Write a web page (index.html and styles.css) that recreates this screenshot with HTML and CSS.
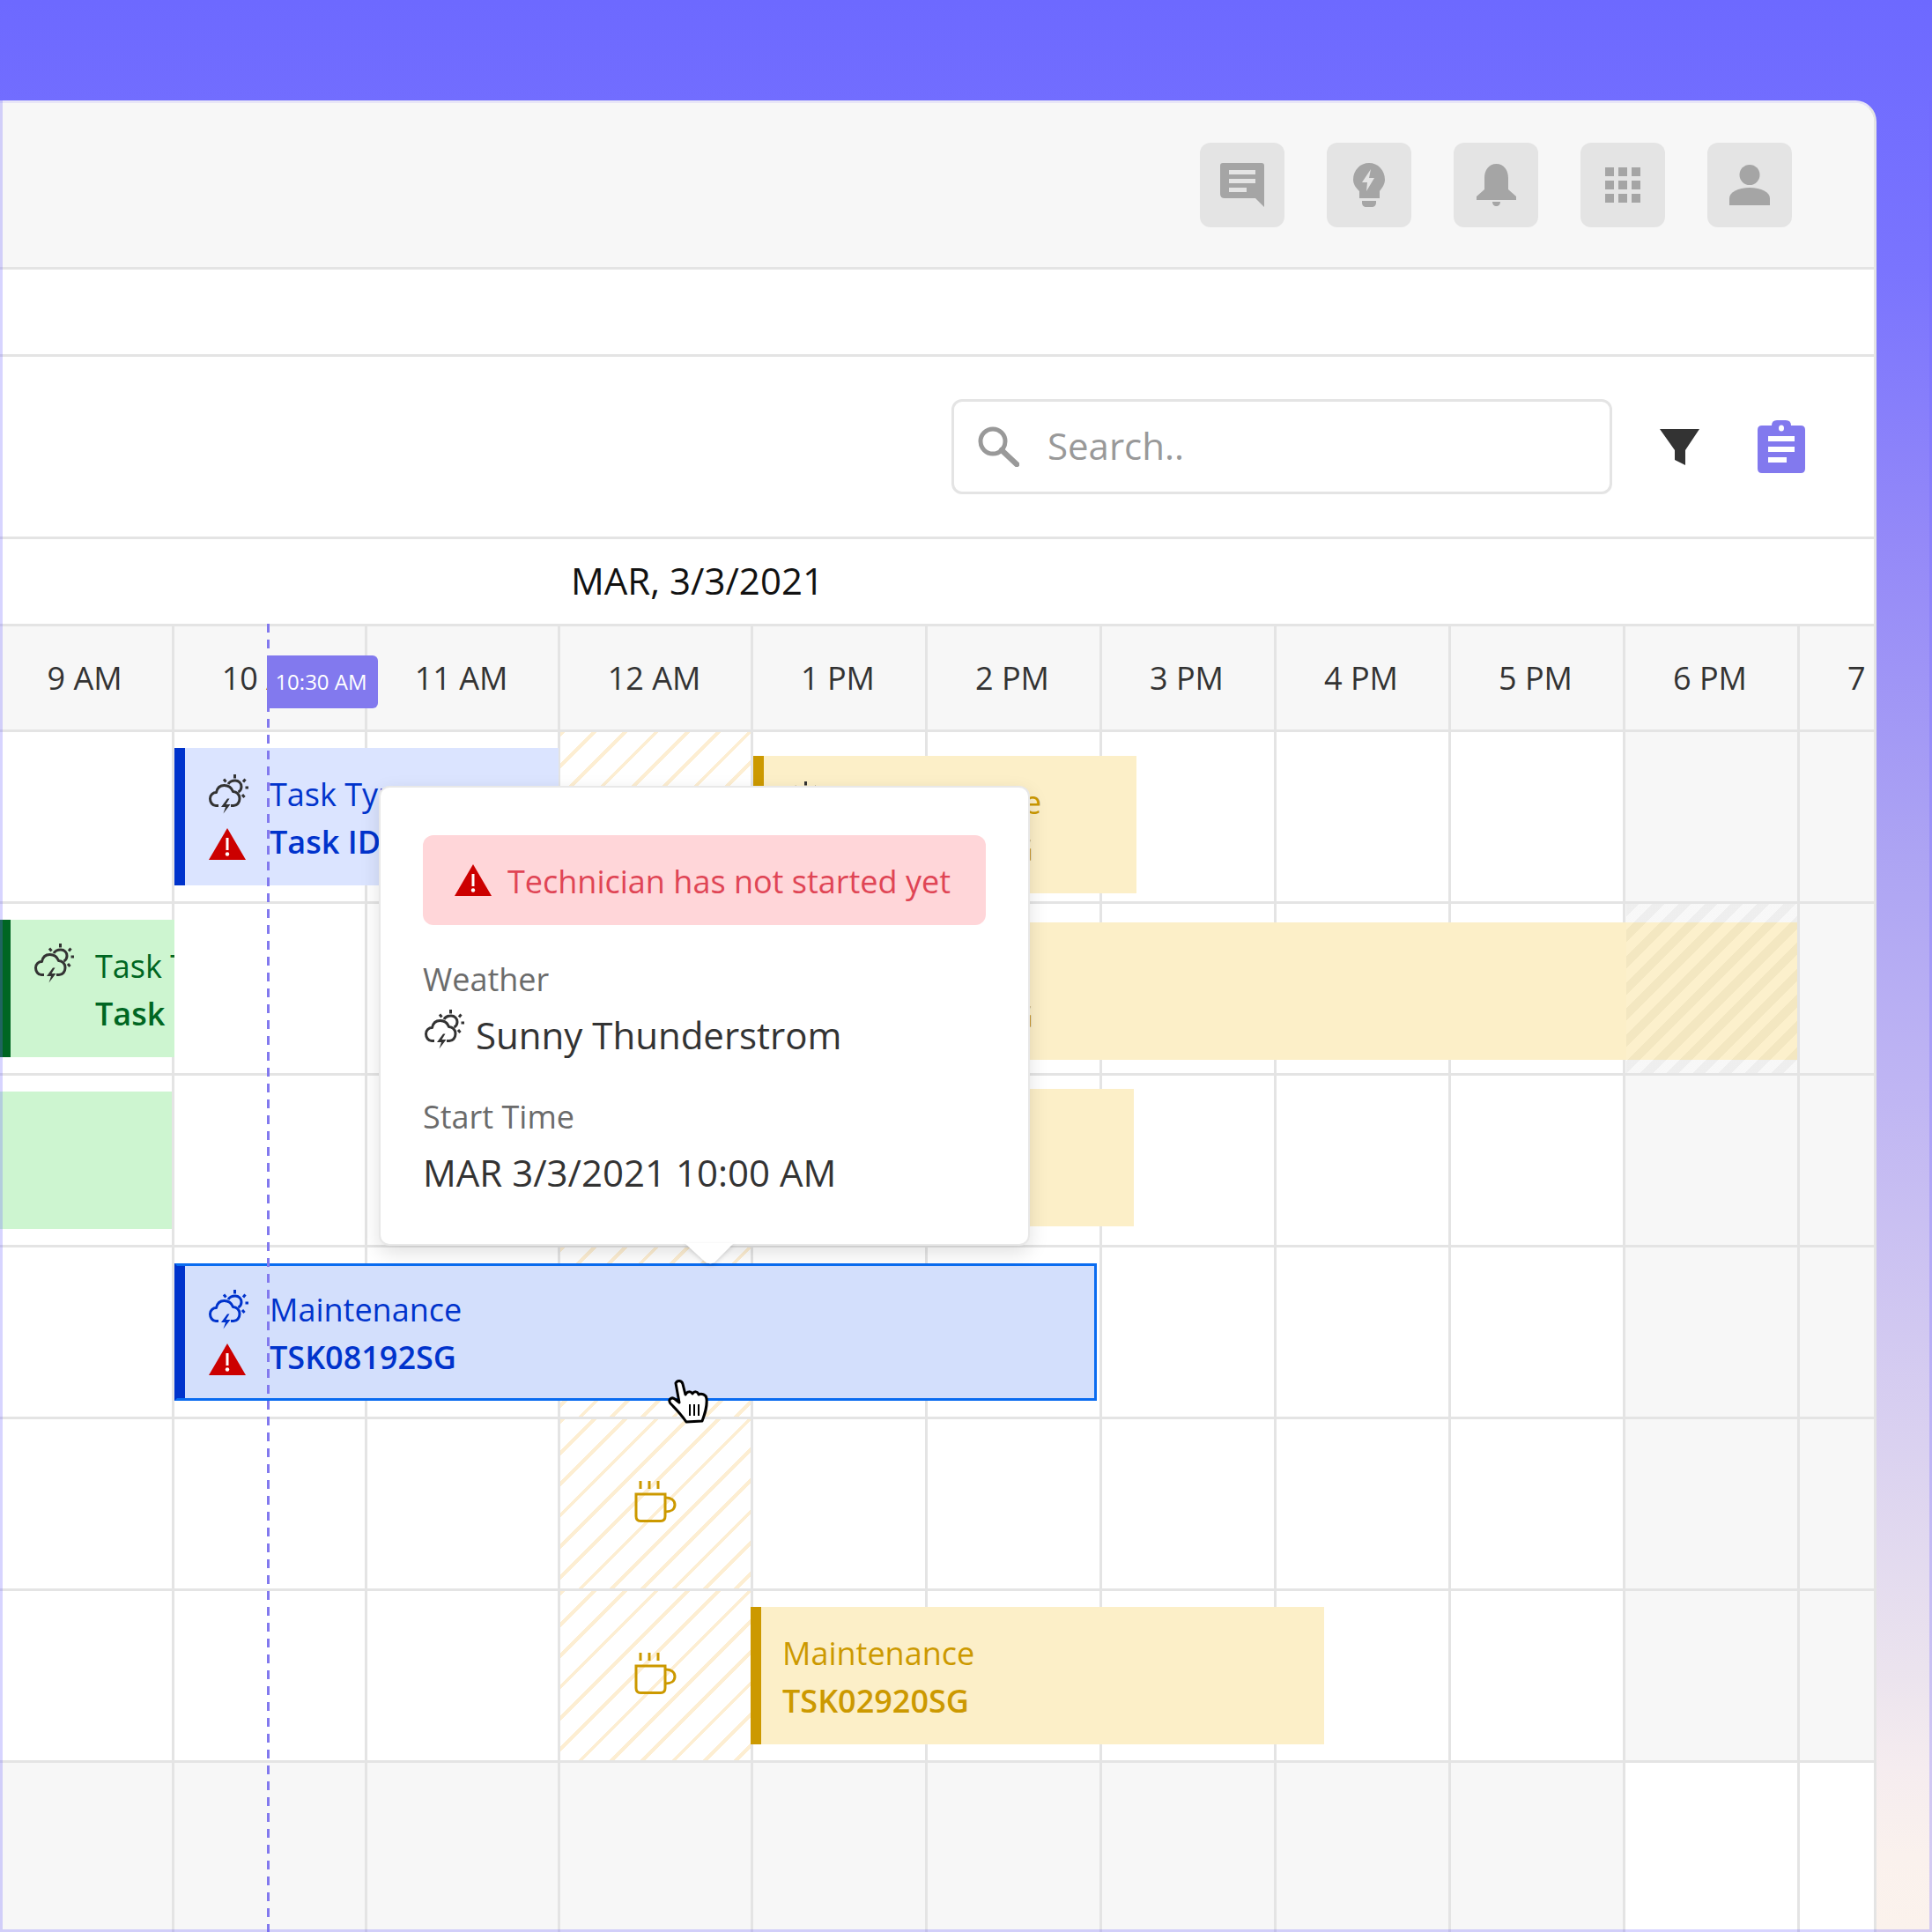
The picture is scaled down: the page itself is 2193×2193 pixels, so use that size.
FILE: index.html
```html
<!DOCTYPE html>
<html lang="en">
<head>
<meta charset="utf-8">
<title>Schedule</title>
<link rel="stylesheet" href="styles.css">
</head>
<body>
<svg class="defs" width="0" height="0" aria-hidden="true">
  <symbol id="weather" viewBox="0 0 45 45">
    <g fill="none" stroke="currentColor" stroke-width="3" stroke-linecap="butt" stroke-linejoin="round">
      <path d="M11 35.500H8C4 35.500 1.500 31.500 1.500 27.500C1.500 23 5 20.500 8.500 20.500C9.500 15.500 13 12.500 17.500 12.500C22.500 12.500 26 15.500 27.500 19.500C31.500 19.500 35 22.500 35 27.500C35 32 32 35.500 28 35.500H25"/>
      <path d="M22 11C23.500 8.500 26.500 7 30 7C34 7 37 10 37 14C37 16.500 35.500 19 33.500 20"/>
      <path d="M29.500 0V4.500M17 5.500L19.500 8.500M41.500 5.500L39 8.500M41.500 15H45M38 23L40.500 26"/>
    </g>
    <path fill="currentColor" d="M21 27.500L14 37H19L16.500 44.500L24.500 34H19.500L23.500 27.500Z"/>
  </symbol>
  <symbol id="warn" viewBox="0 0 42 36">
    <path fill="#cc0000" d="M21 0L42 36H0Z"/>
    <rect fill="#fff" x="19.500" y="11" width="3" height="14"/>
    <circle fill="#fff" cx="21" cy="29.500" r="2.200"/>
  </symbol>
  <symbol id="coffee" viewBox="0 0 48 47">
    <g fill="none" stroke="currentColor" stroke-width="3">
      <path d="M2 15H35V40C35 44 33 45.500 30 45.500H7C4 45.500 2 44 2 40Z"/>
      <path d="M35 19C42 19 46 22 46 27C46 32 42 35 35 35"/>
      <path d="M7 0V9M17 0V9M27 0V9"/>
    </g>
  </symbol>
</svg>
<div class="frame">
  <main class="card">
    <header class="topbar">
      <button class="tool" aria-label="Messages">
        <svg width="50" height="50" viewBox="0 0 50 50"><path fill="#a5a5a5" d="M3 0H47Q50 0 50 3V50L40 40H5Q0 40 0 35V3Q0 0 3 0Z"/><path fill="#e4e4e4" d="M10 8H40V13H10ZM10 18H40V23H10ZM10 28H30V33H10Z"/></svg>
      </button>
      <button class="tool" aria-label="Ideas">
        <svg width="36" height="50" viewBox="0 0 36 50"><path fill="#a5a5a5" d="M18 0C28 0 36 8 36 19C36 24 33 28 30 32V40H7V32C3 28 0 24 0 19C0 8 8 0 18 0ZM10 43H26V45C26 48 24 50 21 50H15C12 50 10 48 10 45Z"/><path fill="#e4e4e4" d="M20 7L10 22H16L15 32L24 17H18Z"/></svg>
      </button>
      <button class="tool" aria-label="Notifications">
        <svg width="45" height="48" viewBox="0 0 45 48"><path fill="#a5a5a5" d="M22.500 0C31 0 36 7 36 16V29L45 37V41H0V37L9 29V16C9 7 14 0 22.500 0ZM18 43H27C27 46 25 48 22.500 48C20 48 18 46 18 43Z"/></svg>
      </button>
      <button class="tool" aria-label="Apps">
        <svg width="40" height="40" viewBox="0 0 40 40"><path fill="#a5a5a5" d="M0 0H10V10H0ZM15 0H25V10H15ZM30 0H40V10H30ZM0 15H10V25H0ZM15 15H25V25H15ZM30 15H40V25H30ZM0 30H10V40H0ZM15 30H25V40H15ZM30 30H40V40H30Z"/></svg>
      </button>
      <button class="tool" aria-label="Profile">
        <svg width="46" height="46" viewBox="0 0 46 46"><ellipse fill="#a5a5a5" cx="23" cy="11.500" rx="11.500" ry="11.500"/><path fill="#a5a5a5" d="M0 46V38C0 31 10 26 23 26C36 26 46 31 46 38V46Z"/></svg>
      </button>
    </header>
    <div class="strip"></div>
    <div class="toolbar">
      <label class="search">
        <svg width="47" height="46" viewBox="0 0 47 46"><circle cx="17" cy="17" r="14" fill="none" stroke="#999" stroke-width="5"/><path d="M27 27L44 43" stroke="#999" stroke-width="6.500" stroke-linecap="round"/></svg>
        <span class="placeholder">Search..</span>
      </label>
      <svg class="filter" width="45" height="41" viewBox="0 0 45 41"><path fill="#333" d="M0 0H45L29 24V41L17 35V24Z"/></svg>
      <svg class="clip" width="54" height="60" viewBox="0 0 54 60"><path fill="#8279ee" d="M22 0H32Q38 0 38 6H49Q54 6 54 11V55Q54 60 49 60H5Q0 60 0 55V11Q0 6 5 6H16Q16 0 22 0Z"/><ellipse fill="#fff" cx="27" cy="9" rx="3" ry="3.500"/><path fill="#fff" d="M12 18H42V24H12ZM12 30H42V36H12ZM12 42H33V48H12Z"/></svg>
    </div>
    <div class="dateline">MAR, 3/3/2021</div>
    <div class="hours">
      <div class="hour">9 AM</div><div class="hour">10 AM</div><div class="hour">11 AM</div><div class="hour">12 AM</div><div class="hour">1 PM</div><div class="hour">2 PM</div><div class="hour">3 PM</div><div class="hour">4 PM</div><div class="hour">5 PM</div><div class="hour">6 PM</div><div class="hour">7 PM</div>
    </div>
    <div class="hours row">
      <div class="cell"></div><div class="cell"></div><div class="cell"></div><div class="cell break"></div><div class="cell"></div><div class="cell"></div><div class="cell"></div><div class="cell"></div><div class="cell"></div><div class="cell shade"></div><div class="cell shade"></div>
    </div>
    <div class="hours row">
      <div class="cell"></div><div class="cell"></div><div class="cell"></div><div class="cell"></div><div class="cell"></div><div class="cell"></div><div class="cell"></div><div class="cell"></div><div class="cell"></div><div class="cell shade"></div><div class="cell shade"></div>
    </div>
    <div class="hours row">
      <div class="cell"></div><div class="cell"></div><div class="cell"></div><div class="cell"></div><div class="cell"></div><div class="cell"></div><div class="cell"></div><div class="cell"></div><div class="cell"></div><div class="cell shade"></div><div class="cell shade"></div>
    </div>
    <div class="hours row">
      <div class="cell"></div><div class="cell"></div><div class="cell"></div><div class="cell break"></div><div class="cell"></div><div class="cell"></div><div class="cell"></div><div class="cell"></div><div class="cell"></div><div class="cell shade"></div><div class="cell shade"></div>
    </div>
    <div class="hours row">
      <div class="cell"></div><div class="cell"></div><div class="cell"></div><div class="cell break"><svg class="mug"><use href="#coffee"/></svg></div><div class="cell"></div><div class="cell"></div><div class="cell"></div><div class="cell"></div><div class="cell"></div><div class="cell shade"></div><div class="cell shade"></div>
    </div>
    <div class="hours row">
      <div class="cell"></div><div class="cell"></div><div class="cell"></div><div class="cell break"><svg class="mug"><use href="#coffee"/></svg></div><div class="cell"></div><div class="cell"></div><div class="cell"></div><div class="cell"></div><div class="cell"></div><div class="cell shade"></div><div class="cell shade"></div>
    </div>
    <div class="hours row lastrow">
      <div class="cell shade"></div><div class="cell shade"></div><div class="cell shade"></div><div class="cell shade"></div><div class="cell shade"></div><div class="cell shade"></div><div class="cell shade"></div><div class="cell shade"></div><div class="cell shade"></div><div class="cell"></div><div class="cell"></div>
    </div>

    <article class="event blue ev-a">
      <div class="marks"><svg class="weather dark"><use href="#weather"/></svg><svg class="warn"><use href="#warn"/></svg></div>
      <div class="lines"><div>Task Type</div><div class="id">Task ID</div></div>
    </article>
    <article class="event amber ev-b">
      <div class="marks marks-top"><svg class="weather dark"><use href="#weather"/></svg></div>
      <div class="lines"><div>Maintenance</div><div class="id">TSK02920SG</div></div>
    </article>
    <article class="event green ev-c">
      <div class="marks marks-top"><svg class="weather dark"><use href="#weather"/></svg></div>
      <div class="lines"><div>Task Type</div><div class="id">Task ID</div></div>
    </article>
    <article class="event amber ev-d">
      <div class="marks marks-top"><svg class="weather dark"><use href="#weather"/></svg></div>
      <div class="lines"><div>Task Type</div><div class="id">TSK02920SG</div></div>
    </article>
    <article class="event green ev-e"></article>
    <article class="event amber ev-f"></article>
    <article class="event selected ev-g">
      <div class="marks"><svg class="weather"><use href="#weather"/></svg><svg class="warn"><use href="#warn"/></svg></div>
      <div class="lines"><div>Maintenance</div><div class="id">TSK08192SG</div></div>
    </article>
    <article class="event amber ev-h">
      <div class="lines"><div>Maintenance</div><div class="id">TSK02920SG</div></div>
    </article>

    <div class="offhatch"></div>
    <div class="nowline"></div>
    <div class="nowbadge">10:30 AM</div>

    <aside class="popup">
      <div class="alert"><svg class="warn"><use href="#warn"/></svg><span>Technician has not started yet</span></div>
      <div class="label">Weather</div>
      <div class="value"><svg class="weather small"><use href="#weather"/></svg><span>Sunny Thunderstrom</span></div>
      <div class="label">Start Time</div>
      <div class="value">MAR 3/3/2021 10:00 AM</div>
    </aside>
    <svg class="arrow" width="56" height="24" viewBox="0 0 56 24"><path fill="#fff" d="M0 0H56L34 22Q28 25 23 21Z"/></svg>

    <svg class="hand" width="46" height="52" viewBox="-1 -1 46 52">
      <path fill="#fff" stroke="#000" stroke-width="3" stroke-linejoin="round" d="M8 3C10 -1 15 0 16 4L19 16C21 12 25 12 27 15C29 12 33 12 34 16C37 14 43 16 43 21C44 30 41 38 38 46L20 47C14 38 8 32 2 26C-1 22 3 18 7 21L12 25Z"/>
      <path stroke="#000" stroke-width="2" d="M24 27V40M29 27V40M34 27V40"/>
    </svg>
  </main>
</div>
</body>
</html>
```
FILE: styles.css
```css
* { box-sizing: border-box; }
html, body { margin: 0; padding: 0; }
body {
  width: 2193px;
  height: 2193px;
  overflow: hidden;
  font-family: "Open Sans", "Noto Sans", sans-serif;
  color: #333;
}
.defs { position: absolute; }
.frame {
  position: relative;
  width: 2193px;
  height: 2193px;
  padding: 114px 63px 0 0;
  background: linear-gradient(180deg, #6d69ff 0%, #7a74fe 14%, #9489f8 28%, #aea5f3 45%, #c0b6f3 57%, #ece4ee 87%, #f5ecef 91.500%, #faf1ed 96%, #fbf2ec 100%);
}
.frame::after {
  content: "";
  position: absolute;
  inset: 114px 0 0 0;
  border: 3px solid rgba(110, 100, 255, 0.28);
  border-top: 0;
  pointer-events: none;
}
.card {
  position: relative;
  width: 2130px;
  height: 2079px;
  overflow: hidden;
  background: #fff;
  border-top: 3px solid #e7e5f7;
  border-right: 3px solid #e4e4e4;
  border-top-right-radius: 24px;
}
.topbar {
  height: 189px;
  display: flex;
  align-items: center;
  justify-content: flex-end;
  gap: 48px;
  padding-right: 93px;
  background: #f7f7f7;
  border-bottom: 3px solid #e4e4e4;
}
.tool {
  width: 96px;
  height: 96px;
  padding: 0;
  display: flex;
  align-items: center;
  justify-content: center;
  background: #e4e4e4;
  border: 0;
  border-radius: 12px;
}
.strip {
  height: 99px;
  border-bottom: 3px solid #e4e4e4;
}
.toolbar {
  height: 207px;
  display: flex;
  align-items: center;
  justify-content: flex-end;
  padding-right: 78px;
  border-bottom: 3px solid #e4e4e4;
}
.search {
  width: 750px;
  height: 108px;
  display: flex;
  align-items: center;
  gap: 32px;
  padding-left: 27px;
  border: 3px solid #e4e4e4;
  border-radius: 12px;
}
.placeholder { font-size: 42px; color: #999; padding-bottom: 3px; }
.filter { margin-left: 54px; }
.clip { margin-left: 66px; }
.dateline {
  height: 99px;
  display: flex;
  align-items: center;
  padding: 0 0 4px 648px;
  font-size: 42px;
  color: #111;
  border-bottom: 3px solid #e4e4e4;
}
.hours {
  display: grid;
  grid-template-columns: 198px repeat(3, 219px) repeat(7, 198px);
  width: 2241px;
}
.hour {
  height: 120px;
  display: flex;
  align-items: center;
  justify-content: center;
  padding-right: 3px;
  font-size: 36px;
  background: #f7f7f7;
  border-right: 3px solid #e4e4e4;
  border-bottom: 3px solid #e4e4e4;
}
.cell {
  height: 195px;
  display: flex;
  align-items: center;
  justify-content: center;
  padding-bottom: 6px;
  background: #fff;
  border-right: 3px solid #e4e4e4;
  border-bottom: 3px solid #e4e4e4;
}
.shade { background: #f7f7f7; }
.break {
  background: repeating-linear-gradient(135deg, #fdeed2 0 4px, #fff 4px 25px);
}
.mug { width: 48px; height: 47px; color: #cc9900; }

.event {
  position: absolute;
  height: 156px;
  display: flex;
  align-items: center;
  gap: 24px;
  padding-left: 27px;
  border-left: 12px solid;
  font-size: 36px;
  line-height: 54px;
  white-space: nowrap;
  overflow: hidden;
}
.marks {
  display: flex;
  flex-direction: column;
  gap: 16px;
  width: 45px;
}
.marks-top { align-self: flex-start; margin-top: 27px; }
.lines { padding-top: 4px; }
.id { font-weight: 600; }
.weather { width: 45px; height: 45px; display: block; }
.dark { color: #333; }
.warn { width: 42px; height: 36px; display: block; flex: none; }
.blue { background: #dbe4ff; border-color: #0033cc; color: #0033cc; }
.green { background: #cdf5d0; border-color: #006622; color: #006622; }
.amber { background: #fcefc8; border-color: #cc9900; color: #cc9900; padding-left: 24px; }
.selected { background: #d3dffc; border-color: #0033cc; color: #0033cc; overflow: visible; }
.selected::after {
  content: "";
  position: absolute;
  inset: 0 0 0 -12px;
  border: 3px solid #0a6cf0;
  border-left-color: #0033cc;
}
.ev-a { left: 198px; top: 732px; width: 436px; }
.ev-b { left: 855px; top: 741px; width: 435px; padding-left: 18px; gap: 34px; }
.ev-b .marks-top { margin-top: 29px; }
.ev-b .id, .ev-d .id { margin-left: -3px; }
.ev-c { left: 0; top: 927px; width: 198px; }
.ev-d { left: 855px; top: 930px; width: 1185px; padding-left: 18px; gap: 34px; }
.ev-e { left: 0; top: 1122px; width: 195px; border-left: 0; }
.ev-f { left: 855px; top: 1119px; width: 432px; }
.ev-g { left: 198px; top: 1317px; width: 1047px; }
.ev-h { left: 852px; top: 1707px; width: 651px; }

.offhatch {
  position: absolute;
  left: 1846px;
  top: 909px;
  width: 194px;
  height: 192px;
  background: repeating-linear-gradient(135deg, rgba(0, 0, 0, 0.035) 0 10px, rgba(255, 255, 255, 0.08) 10px 21px);
}
.nowline {
  position: absolute;
  left: 303px;
  top: 591px;
  bottom: 0;
  width: 3px;
  background: repeating-linear-gradient(180deg, #8279ee 0 10px, transparent 10px 18px);
}
.nowbadge {
  position: absolute;
  left: 303px;
  top: 627px;
  width: 126px;
  height: 60px;
  display: flex;
  align-items: center;
  justify-content: center;
  padding: 0 3px 2px 0;
  font-size: 24px;
  color: #fff;
  background: #8279ee;
  border-radius: 0 6px 6px 0;
}
.popup {
  position: absolute;
  left: 430px;
  top: 775px;
  width: 739px;
  height: 522px;
  padding: 54px 48px 0 48px;
  background: #fff;
  border: 2px solid #e8e8e8;
  border-radius: 12px;
  box-shadow: 0 8px 22px rgba(0, 0, 0, 0.12);
}
.alert {
  height: 102px;
  display: flex;
  align-items: center;
  gap: 18px;
  padding: 0 0 0 36px;
  margin-bottom: 38px;
  font-size: 36px;
  color: #e04555;
  background: #ffd6d9;
  border-radius: 12px;
}
.alert span { padding-top: 2px; }
.label {
  height: 48px;
  line-height: 48px;
  font-size: 36px;
  color: #6b6b6b;
}
.value {
  height: 60px;
  margin: 10px 0 38px;
  padding-bottom: 4px;
  display: flex;
  align-items: center;
  gap: 13px;
  font-size: 42px;
  color: #333;
}
.small { width: 45px; height: 45px; margin-left: 2px; align-self: flex-start; }
.arrow {
  position: absolute;
  left: 777px;
  top: 1294px;
  filter: drop-shadow(0 2px 2px rgba(0, 0, 0, 0.14));
}
.hand {
  position: absolute;
  left: 758px;
  top: 1449px;
}
```
